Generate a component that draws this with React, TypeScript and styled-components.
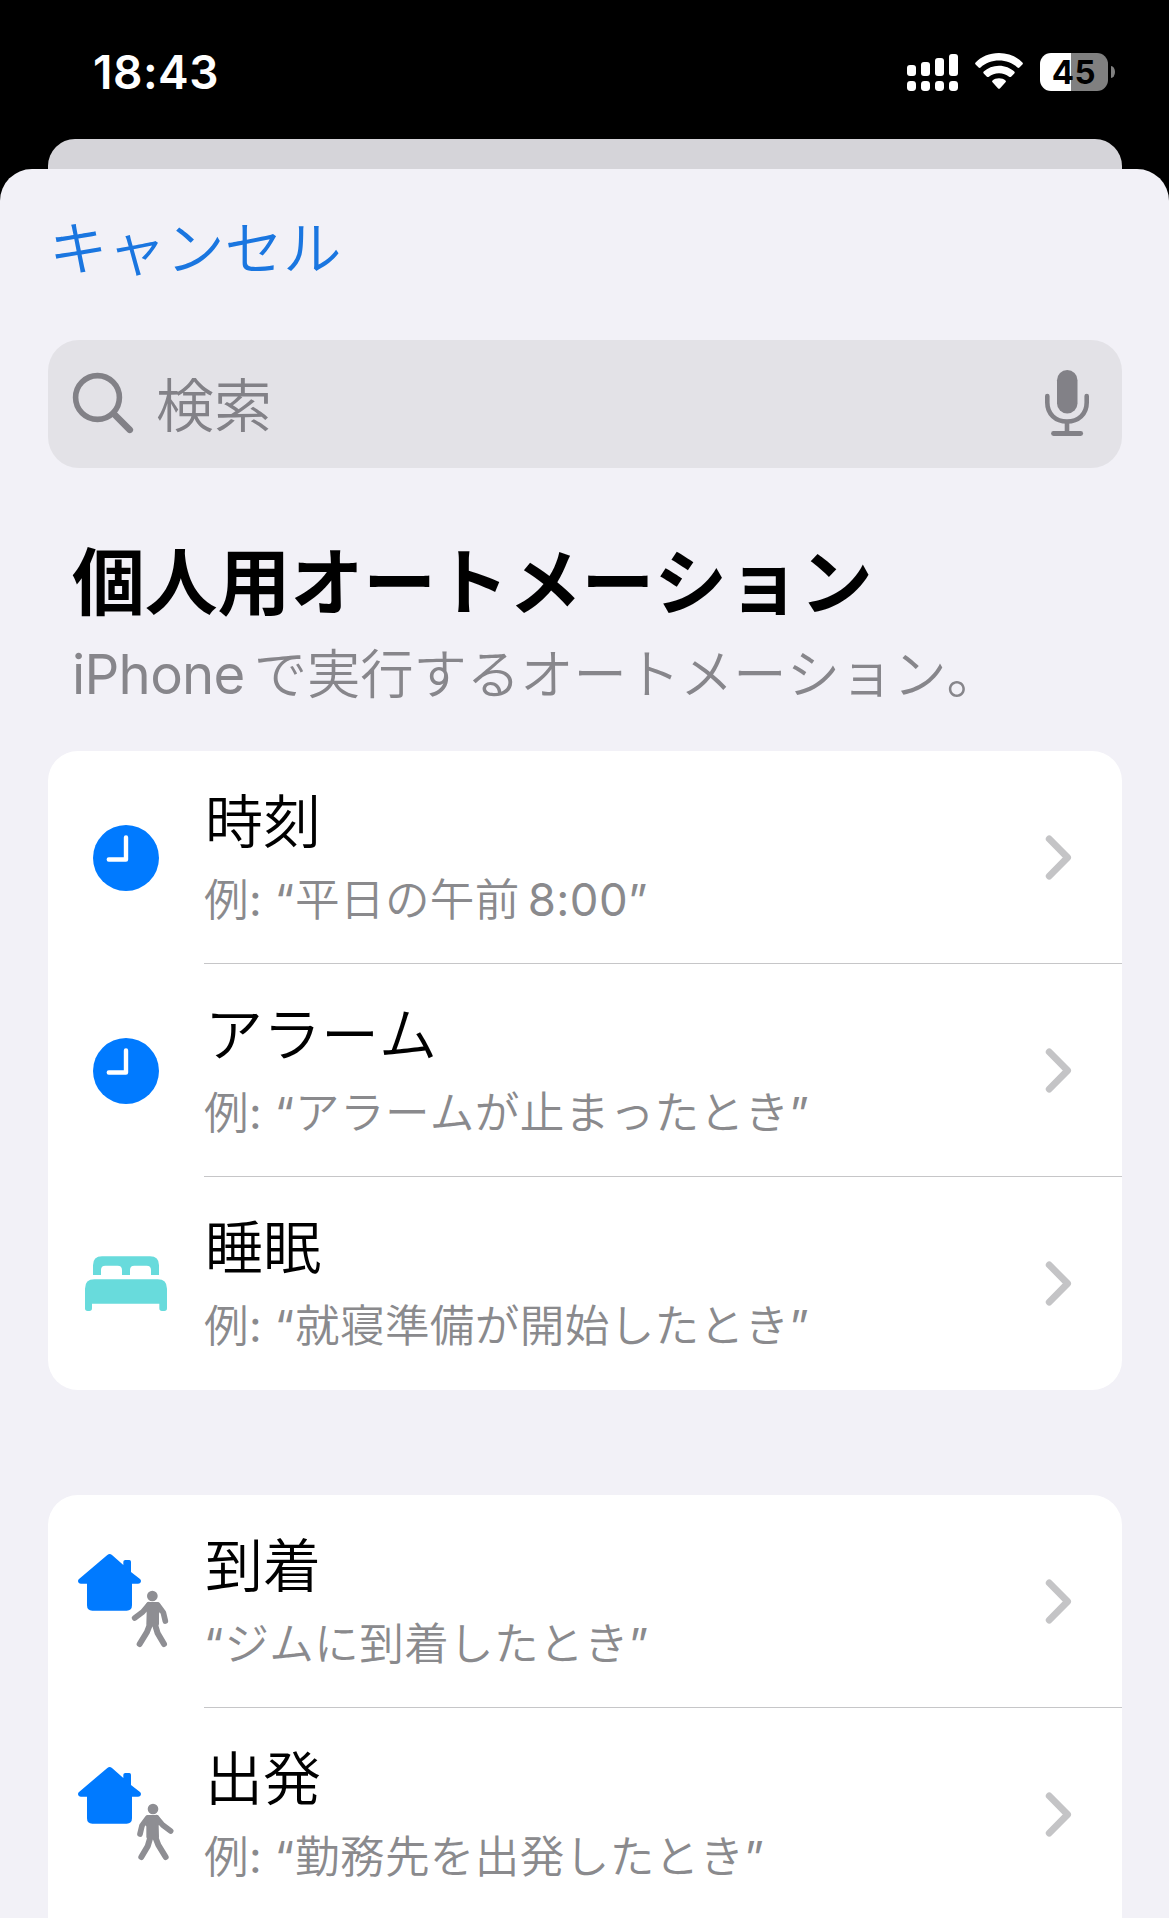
import React from "react";
import styled, { createGlobalStyle } from "styled-components";

const GlobalStyle = createGlobalStyle`
  html, body { margin: 0; padding: 0; background: #000; }
  * { box-sizing: border-box; }
  body {
    font-family: "Noto Sans CJK JP", "Liberation Sans", sans-serif;
    font-weight: 350;
    font-kerning: none;
  }
`;

const Screen = styled.div`
  width: 1169px;
  height: 1918px;
  overflow: hidden;
  background: #000;
  display: flex;
  flex-direction: column;
`;

const StatusBar = styled.header`
  height: 139px;
  flex: none;
  display: flex;
  justify-content: space-between;
  align-items: flex-start;
  padding: 44px 54px 0 93px;
`;

const Clock = styled.div`
  font: 600 46px/56px Inter, sans-serif;
  letter-spacing: 0.5px;
  color: #fff;
`;

const StatusIcons = styled.div`
  display: flex;
  gap: 17px;
  padding-top: 9px;
`;

const Battery = styled.div`
  display: flex;
  align-items: center;
  gap: 3px;
`;

const BatteryBody = styled.div<{ $level: number }>`
  width: 68px;
  height: 38px;
  border-radius: 11px;
  background: linear-gradient(to right, #fff ${(p) => p.$level}%, #808080 ${(p) => p.$level}%);
  color: #000;
  font: 700 33px/38px Inter, sans-serif;
  letter-spacing: 0.5px;
  text-align: center;
`;

const BatteryTip = styled.div`
  width: 4px;
  height: 12px;
  background: #808080;
  border-radius: 0 4px 4px 0 / 0 6px 6px 0;
`;

const BackSheet = styled.div`
  flex: none;
  height: 30px;
  margin: 0 47.5px;
  background: #d5d4d9;
  border-radius: 27px 27px 0 0;
`;

const Sheet = styled.main`
  flex: 1;
  min-height: 0;
  background: #f2f1f7;
  border-radius: 32px 32px 0 0;
  padding: 0 47.5px 0 48px;
  display: flex;
  flex-direction: column;
`;

const CancelButton = styled.button`
  border: 0;
  background: none;
  align-self: flex-start;
  margin: 36px 0 0 1px;
  padding: 0;
  font-family: inherit;
  font-weight: inherit;
  font-size: 58.5px;
  line-height: 80px;
  color: #1a76e0;
`;

const SearchBox = styled.div`
  flex: none;
  margin-top: 55px;
  height: 128px;
  border-radius: 31px;
  background: #e3e2e7;
  display: flex;
  align-items: center;
  padding: 0 33px 2px 24px;
`;

const Placeholder = styled.span`
  flex: 1;
  margin: 0 0 3px 22px;
  font-size: 58px;
  line-height: 80px;
  color: #828187;
`;

const Title = styled.h1`
  margin: 70px 0 0 24px;
  font-size: 72.8px;
  line-height: 80px;
  font-weight: 700;
  color: #000;
  white-space: nowrap;
`;

const Subtitle = styled.p`
  margin: 18px 0 0 24px;
  font-size: 53.3px;
  line-height: 70px;
  color: #87868b;
  white-space: nowrap;
`;

const Latin = styled.span<{ $size?: number; $track?: number; $after?: number; $before?: number }>`
  font-family: Inter, sans-serif;
  font-weight: 400;
  font-kerning: normal;
  line-height: 1;
  font-size: ${(p) => p.$size ?? 44}px;
  letter-spacing: ${(p) => p.$track ?? 0}px;
  margin-left: ${(p) => p.$before ?? 0}px;
  margin-right: ${(p) => p.$after ?? 0}px;
`;

const Card = styled.section<{ $top: number; $continues?: boolean }>`
  flex: none;
  margin-top: ${(p) => p.$top}px;
  padding-bottom: ${(p) => (p.$continues ? 60 : 0)}px;
  border-radius: 30px;
  background: #fff;
  overflow: hidden;
`;

const Row = styled.div`
  display: grid;
  grid-template-columns: 156px 1fr;
  height: 213px;
`;

const RowBody = styled.div<{ $last?: boolean }>`
  display: flex;
  align-items: center;
  justify-content: space-between;
  padding-right: 50px;
  border-bottom: 1px solid ${(p) => (p.$last ? "transparent" : "#c6c6c8")};
`;

const RowText = styled.div`
  align-self: flex-start;
  padding-top: 32px;
`;

const RowTitle = styled.div`
  margin-left: 1px;
  font-size: 58px;
  line-height: 70px;
  color: #000;
  white-space: nowrap;
`;

const RowHint = styled.div`
  margin-top: 14px;
  font-size: 44.6px;
  letter-spacing: 0.35px;
  line-height: 60px;
  color: #8a8a8d;
  white-space: nowrap;
`;

const SignalIcon = () => (
  <svg width="51" height="38" viewBox="0 0 51 38" fill="#fff">
    {[12, 9, 5, 1].map((top, i) => (
      <g key={top}>
        <rect x={i * 14} y={top} width="9" height={23 - top} rx="3" />
        <rect x={i * 14} y="28" width="9" height="10" rx="3.4" />
      </g>
    ))}
  </svg>
);

const WifiIcon = () => (
  <svg width="48" height="38" viewBox="0 0 48 38" fill="#fff">
    <path d="M24 0C14.500 0 6 3.800.6 9.400q-1 1 0 2L3.600 14.500q1 .9 2 0C10.500 10 17 7.600 24 7.600S37.500 10 42.400 14.500q1 .9 2 0L47.400 11.400q1-1 0-2C42 3.800 33.500 0 24 0Z" />
    <path d="M24 12.700c-6 0-11.400 2.200-15.300 5.800q-1 1 0 2l3.200 3.200q1 .8 2 0C16.700 21.500 20 20.200 24 20.200s7.300 1.300 10.100 3.500q1 .8 2 0l3.200-3.200q1-1 0-2C35.400 14.900 30 12.700 24 12.700Z" />
    <path d="M24 25.200c-2.600 0-4.900.8-6.500 2.200q-1 .9 0 1.900l5.400 5.900q1.100 1.100 2.200 0l5.400-5.900q1-1 0-1.900C28.900 26 26.600 25.200 24 25.200Z" />
  </svg>
);

const SearchIcon = () => (
  <svg width="62" height="62" viewBox="0 0 62 62" fill="none" stroke="#828187" strokeLinecap="round">
    <circle cx="25.500" cy="25.500" r="21.900" strokeWidth="5.600" />
    <path d="M41.500 41.500 57.800 57.800" strokeWidth="6.600" />
  </svg>
);

const MicIcon = () => (
  <svg width="44" height="66" viewBox="0 0 44 66" fill="none" stroke="#828187" strokeLinecap="round">
    <rect x="12" y="0" width="20.500" height="43.500" rx="10.250" fill="#828187" stroke="none" />
    <path d="M2.300 26V32.500C2.300 44 10.500 51.500 22 51.500S41.700 44 41.700 32.500V26" strokeWidth="4.600" />
    <path d="M22 52V63" strokeWidth="4.600" strokeLinecap="butt" />
    <path d="M8.500 63.500H35.700" strokeWidth="4.800" />
  </svg>
);

const Chevron = () => (
  <svg width="27" height="45" viewBox="0 0 27 45" fill="none" stroke="#c4c4c6" strokeWidth="6.800" strokeLinecap="round" strokeLinejoin="round">
    <path d="M4.200 3.900 22.600 22.500 4.200 41.100" />
  </svg>
);

const ClockIcon = () => (
  <svg width="156" height="213" viewBox="0 0 156 213">
    <circle cx="78" cy="107" r="33" fill="#007aff" />
    <path d="M78 86.500V108.500H60.800" fill="none" stroke="#fff" strokeWidth="4.400" strokeLinecap="round" strokeLinejoin="round" />
  </svg>
);

const BedIcon = () => (
  <svg width="156" height="213" viewBox="0 0 156 213">
    <g transform="translate(-8 23) scale(.33333)" fill="#68dbdc">
      <path d="M159 225V196Q159 169 186 169H330Q357 169 357 196V225H333V210Q333 197 320 197H283Q270 197 270 210V225H246V210Q246 197 233 197H196Q183 197 183 210V225Z" />
      <path d="M135 325V266Q135 238 163 238H353Q381 238 381 266V325Q381 333 373 333H366Q358 333 358 325V311H156V325Q156 333 148 333H143Q135 333 135 325Z" />
    </g>
  </svg>
);

const House = () => (
  <path
    fill="#007aff"
    d="M202 195Q209 189 216 195L250 225V215Q250 210 256 210H268Q273 210 273 215V246L299 266Q303 269 303 273Q302 281 294 281H276V346Q276 362 260 362H157Q141 362 141 346V281H123Q115 281 114 273Q114 269 118 266Z"
  />
);

const Walker = () => (
  <g fill="none" stroke="#8e8e93" strokeLinecap="round" strokeLinejoin="round">
    <circle cx="337" cy="318" r="16" fill="#8e8e93" stroke="none" />
    <path d="M327 344 308 366 284 384M353 345 370 368 376 393" strokeWidth="17" />
    <path d="M331 400 321 426 299 462M344 400 353 430 372 462" strokeWidth="18" />
    <path d="M325 341H350L360 352 352 370 352 402H324L325 368 320 350Z" fill="#8e8e93" strokeWidth="10" />
  </g>
);

const ArriveIcon = () => (
  <svg width="156" height="213" viewBox="0 0 156 213">
    <g transform="translate(-8 -5) scale(.33333)">
      <House />
      <Walker />
    </g>
  </svg>
);

const LeaveIcon = () => (
  <svg width="156" height="213" viewBox="0 0 156 213">
    <g transform="translate(-8 -5) scale(.33333)">
      <House />
      <g transform="translate(676 0) scale(-1 1)">
        <Walker />
      </g>
    </g>
  </svg>
);

interface ItemProps {
  icon: React.ReactNode;
  title: string;
  hint: string;
  example?: boolean;
  suffix?: string;
  last?: boolean;
}

const Item = ({ icon, title, hint, example, suffix, last }: ItemProps) => (
  <Row>
    {icon}
    <RowBody $last={last}>
      <RowText>
        <RowTitle>{title}</RowTitle>
        <RowHint>
          {example && (
            <>
              例<Latin $after={13}>:</Latin>
            </>
          )}
          <Latin $after={1}>“</Latin>
          {hint}
          {suffix && <Latin $before={8} $size={45.5} $track={0.4}>{suffix}</Latin>}
          <Latin>”</Latin>
        </RowHint>
      </RowText>
      <Chevron />
    </RowBody>
  </Row>
);

export default function App() {
  return (
    <>
      <GlobalStyle />
      <Screen lang="ja">
        <StatusBar>
          <Clock>18:43</Clock>
          <StatusIcons>
            <SignalIcon />
            <WifiIcon />
            <Battery>
              <BatteryBody $level={45.6}>45</BatteryBody>
              <BatteryTip />
            </Battery>
          </StatusIcons>
        </StatusBar>
        <BackSheet />
        <Sheet>
          <CancelButton>キャンセル</CancelButton>
          <SearchBox>
            <SearchIcon />
            <Placeholder>検索</Placeholder>
            <MicIcon />
          </SearchBox>
          <Title>個人用オートメーション</Title>
          <Subtitle>
            <Latin $size={54.5} $after={9} $track={-0.7}>iPhone</Latin>
            で実行するオートメーション。
          </Subtitle>
          <Card $top={45}>
            <Item icon={<ClockIcon />} title="時刻" example hint="平日の午前" suffix="8:00" />
            <Item icon={<ClockIcon />} title="アラーム" example hint="アラームが止まったとき" />
            <Item icon={<BedIcon />} title="睡眠" example hint="就寝準備が開始したとき" last />
          </Card>
          <Card $top={105} $continues>
            <Item icon={<ArriveIcon />} title="到着" hint="ジムに到着したとき" />
            <Item icon={<LeaveIcon />} title="出発" example hint="勤務先を出発したとき" last />
          </Card>
        </Sheet>
      </Screen>
    </>
  );
}
